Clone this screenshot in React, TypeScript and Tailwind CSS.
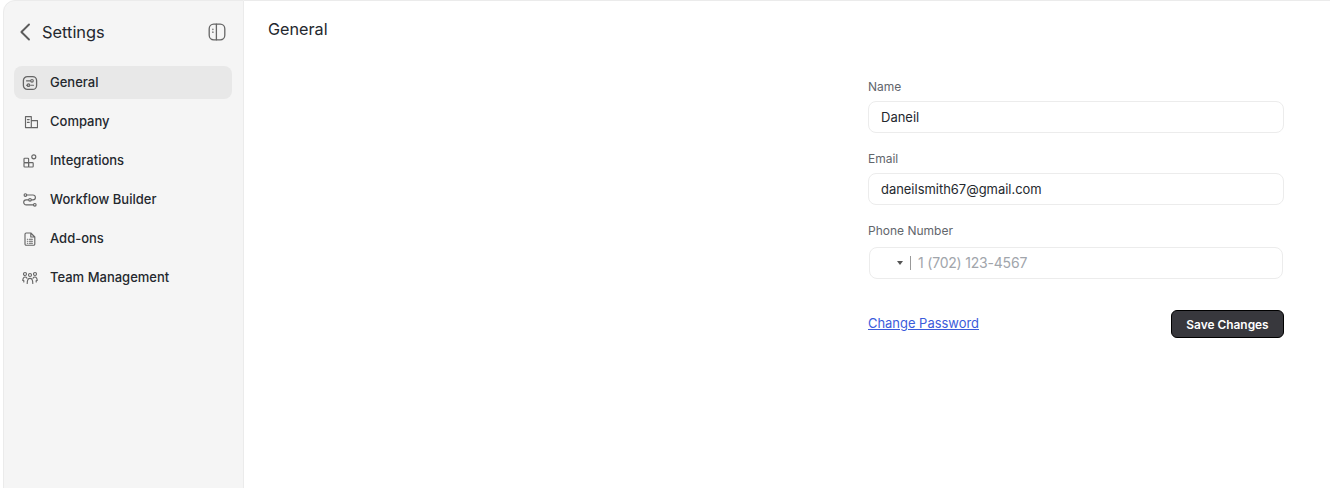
import React from "react";

const stroke = { fill: "none", stroke: "#666666", strokeWidth: 1.15, strokeLinecap: "round" as const, strokeLinejoin: "round" as const };

const GeneralIcon = () => (
  <svg width="16" height="16" viewBox="0 0 16 16" {...stroke}>
    <rect x="1.4" y="1.6" width="13.2" height="12.8" rx="4" strokeWidth="1.3" />
    <path d="M4.5 5.8h4M4.5 10.2h1.5M8.8 10.2h2.7" />
    <circle cx="10" cy="5.8" r="1.3" />
    <circle cx="6.5" cy="10.2" r="1.3" />
  </svg>
);
const CompanyIcon = () => (
  <svg width="16" height="14" viewBox="-2 0 16 14" {...stroke}>
    <path d="M1.5 12.6V1.6h5.8v11M7.3 5.6h6.2v7H1.5M3.4 4.6h1.8M3.4 7.4h1.8" />
  </svg>
);
const IntegrationsIcon = () => (
  <svg width="14" height="14" viewBox="0 0 14 14" {...stroke}>
    <rect x="1" y="4.2" width="4.6" height="4.4" rx="0.8" />
    <rect x="1" y="8.6" width="4.6" height="4.4" rx="0.8" />
    <rect x="5.6" y="8.6" width="4.6" height="4.4" rx="0.8" />
    <circle cx="10.8" cy="2.8" r="2" />
  </svg>
);
const WorkflowIcon = () => (
  <svg width="14" height="14" viewBox="0 0 14 14" {...stroke}>
    <circle cx="2.4" cy="2" r="1.3" />
    <circle cx="7" cy="6.8" r="1.3" />
    <circle cx="11.8" cy="11.8" r="1.3" />
    <path d="M3.8 2h6.2a2.4 2.4 0 0 1 0 4.8H8.4M5.6 6.8H3.2a2.5 2.5 0 0 0 0 5h7.2" />
  </svg>
);
const AddonsIcon = () => (
  <svg width="14" height="14" viewBox="0 0 14 14" {...stroke}>
    <path d="M2 2.2A1.2 1.2 0 0 1 3.2 1h4.6l4 4v7a1.2 1.2 0 0 1-1.2 1.2H3.2A1.2 1.2 0 0 1 2 12zM7.8 1v4h4" />
    <path d="M4.4 7.2h.3M6.4 7.2h3M4.4 9.2h.3M6.4 9.2h3M4.4 11.2h.3M6.4 11.2h3" />
  </svg>
);
const TeamIcon = () => (
  <svg width="16" height="14" viewBox="0 0 16 14" {...stroke}>
    <circle cx="3" cy="3" r="1.5" />
    <circle cx="8" cy="4" r="1.5" />
    <circle cx="13" cy="3" r="1.5" />
    <path d="M.8 9.4c0-2 1-3.4 2.2-3.4s1.6.5 2 1.2M15.2 9.4c0-2-1-3.4-2.2-3.4s-1.6.5-2 1.2M5.2 12.4c0-3 1.2-5 2.8-5s2.8 2 2.8 5M1.8 9.6v1.4M14.2 9.6v1.4" />
  </svg>
);
const PanelIcon = () => (
  <svg width="18" height="18" viewBox="0 0 18 18" fill="none" stroke="#666666" strokeWidth="1.3" strokeLinecap="round">
    <rect x="1.2" y="1.2" width="15.6" height="15.6" rx="4.5" />
    <path d="M8.4 1.2v15.6" />
    <path d="M4.9 6.2v.4M4.9 9v.4" />
  </svg>
);

const nav = [
  { label: "General", icon: <GeneralIcon />, active: true },
  { label: "Company", icon: <CompanyIcon /> },
  { label: "Integrations", icon: <IntegrationsIcon /> },
  { label: "Workflow Builder", icon: <WorkflowIcon /> },
  { label: "Add-ons", icon: <AddonsIcon /> },
  { label: "Team Management", icon: <TeamIcon /> },
];

export default function App() {
  return (
    <div className="flex h-[488px] w-[1330px] overflow-hidden bg-white font-['Inter',sans-serif] text-[#24282e]">
      <div className="ml-[3px] flex h-[500px] w-[241px] shrink-0 flex-col rounded-tl-xl border border-[#ebebeb] bg-[#f5f5f5] pl-[10px] pr-[11px]">
        <div className="flex h-[61px] items-center justify-between pl-[5px] pr-[6px]">
          <div className="flex items-center gap-[11px]">
            <svg width="12" height="18" viewBox="0 0 12 18" fill="none" stroke="#5c5c5c" strokeWidth="1.9" strokeLinecap="round" strokeLinejoin="round">
              <path d="M10 1.5 2.4 9l7.6 7.5" />
            </svg>
            <span className="text-[16.4px] font-normal leading-6">Settings</span>
          </div>
          <PanelIcon />
        </div>
        <nav className="mt-[4px] flex flex-col gap-[6px]">
          {nav.map((n) => (
            <div
              key={n.label}
              className={`flex h-[33px] items-center rounded-lg pl-[8px] text-[13px] font-medium ${n.active ? "bg-[#e8e8e8]" : ""}`}
            >
              <span className="flex w-[16px] items-center justify-center">{n.icon}</span>
              <span className="ml-[12px]">{n.label}</span>
            </div>
          ))}
        </nav>
      </div>
      <div className="flex min-w-0 flex-1 flex-col border-t border-[#ebebeb] pl-[24px] pr-[46px]">
        <h1 className="mt-[16px] text-[16.2px] font-normal leading-6">General</h1>
        <div className="ml-auto mt-[38px] flex w-[416px] flex-col">
          <label className="text-xs font-normal leading-4 text-[#62666c]">Name</label>
          <input readOnly value="Daneil" className="mt-[6px] h-[32px] rounded-lg border border-[#ececec] px-[12px] text-[13px] text-[#24282e] outline-none" />
          <label className="mt-[18px] text-xs leading-4 text-[#62666c]">Email</label>
          <input readOnly value="daneilsmith67@gmail.com" className="mt-[6px] h-[32px] rounded-lg border border-[#ececec] px-[12px] text-[12.95px] text-[#24282e] outline-none" />
          <label className="mt-[18px] text-xs leading-4 text-[#62666c]">Phone Number</label>
          <div className="ml-px mr-px mt-[8px] flex h-[32px] items-center rounded-lg border border-[#ececec]">
            <span className="ml-[27px] h-0 w-0 border-x-[3px] border-t-[4px] border-x-transparent border-t-[#555]" />
            <span className="ml-[7px] h-[14px] w-px bg-[#999]" />
            <span className="ml-[7px] text-sm tracking-[-0.2px] text-[#a1a5ab]">1 (702) 123-4567</span>
          </div>
          <div className="mt-[31px] flex items-center justify-between">
            <a className="text-[12.95px] text-[#3b5bdb] underline">Change Password</a>
            <button className="h-[28px] w-[113px] rounded-md border border-black bg-[#38383d] pt-px text-[11.9px] font-semibold text-white">Save Changes</button>
          </div>
        </div>
      </div>
    </div>
  );
}
